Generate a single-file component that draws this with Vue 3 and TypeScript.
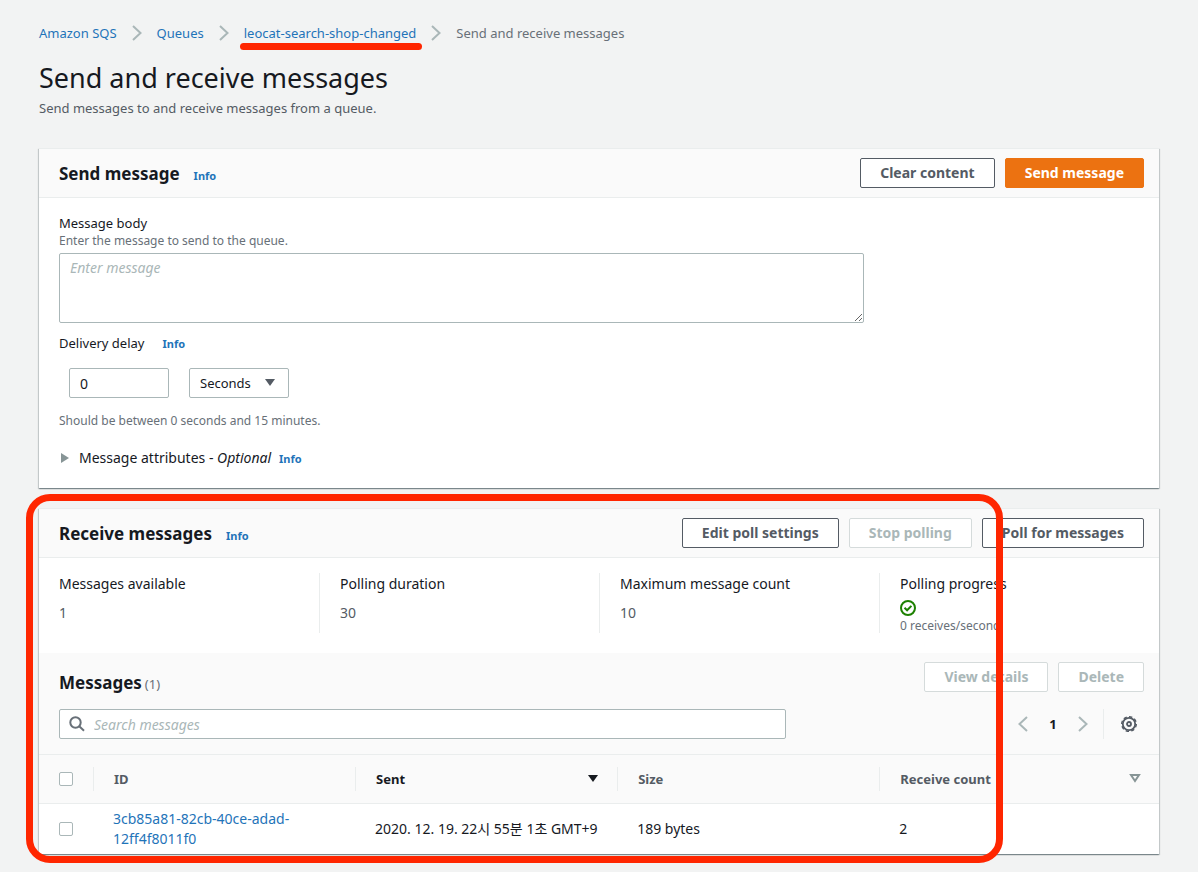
<script setup lang="ts">
import { ref } from 'vue'

interface Stat {
  label: string
  value: string
}
interface Message {
  id: string
  sent: string
  size: string
  receiveCount: number
}

const body = ref('')
const delay = ref('0')
const unit = ref('Seconds')
const search = ref('')

const stats: Stat[] = [
  { label: 'Messages available', value: '1' },
  { label: 'Polling duration', value: '30' },
  { label: 'Maximum message count', value: '10' },
]
const messages: Message[] = [
  {
    id: '3cb85a81-82cb-40ce-adad-12ff4f8011f0',
    sent: '2020. 12. 19. 22시 55분 1초 GMT+9',
    size: '189 bytes',
    receiveCount: 2,
  },
]
const crumbs = [
  { text: 'Amazon SQS', marked: false },
  { text: 'Queues', marked: false },
  { text: 'leocat-search-shop-changed', marked: true },
]
</script>

<template>
  <main class="page">
    <nav class="crumbs" aria-label="Breadcrumb">
      <template v-for="c in crumbs" :key="c.text">
        <a href="#" :class="{ marked: c.marked }">{{ c.text }}</a>
        <svg class="chev" viewBox="0 0 10 16" aria-hidden="true"><path d="M1 1l7.5 7L1 15" /></svg>
      </template>
      <span>Send and receive messages</span>
    </nav>

    <header class="title">
      <h1>Send and receive messages</h1>
      <p>Send messages to and receive messages from a queue.</p>
    </header>

    <section class="card">
      <div class="card-head">
        <h2>Send message</h2>
        <a class="info" href="#">Info</a>
        <div class="actions">
          <button class="btn" type="button">Clear content</button>
          <button class="btn primary" type="button">Send message</button>
        </div>
      </div>
      <div class="form">
        <label for="body">Message body</label>
        <p class="hint">Enter the message to send to the queue.</p>
        <textarea id="body" v-model="body" class="box" placeholder="Enter message"></textarea>
        <div class="row">
          <label for="delay">Delivery delay</label>
          <a class="info" href="#">Info</a>
        </div>
        <div class="delay">
          <input id="delay" v-model="delay" class="box" type="text" />
          <div class="select">
            <select v-model="unit" class="box" aria-label="Delay unit">
              <option>Seconds</option>
              <option>Minutes</option>
            </select>
            <svg viewBox="0 0 12 9" aria-hidden="true"><path d="M1 1h10L6 8z" /></svg>
          </div>
        </div>
        <p class="hint">Should be between 0 seconds and 15 minutes.</p>
        <div class="attributes">
          <button class="expander" type="button" aria-expanded="false">
            <svg viewBox="0 0 8 10" aria-hidden="true"><path d="M0 0l8 5-8 5z" /></svg>
            <span>Message attributes - <em>Optional</em></span>
          </button>
          <a class="info" href="#">Info</a>
        </div>
      </div>
    </section>

    <section class="card receive">
      <div class="card-head">
        <h2>Receive messages</h2>
        <a class="info" href="#">Info</a>
        <div class="actions">
          <button class="btn" type="button">Edit poll settings</button>
          <button class="btn" type="button" disabled>Stop polling</button>
          <button class="btn" type="button">Poll for messages</button>
        </div>
      </div>

      <dl class="stats">
        <div v-for="s in stats" :key="s.label">
          <dt>{{ s.label }}</dt>
          <dd>{{ s.value }}</dd>
        </div>
        <div>
          <dt>Polling progress</dt>
          <dd class="progress">
            <svg viewBox="0 0 16 16" aria-hidden="true">
              <circle cx="8" cy="8" r="7" />
              <path d="M4.5 7.8l2.6 2.5 4.3-4.4" />
            </svg>
            <span>0 receives/second</span>
          </dd>
        </div>
      </dl>

      <div class="toolbar">
        <div class="toolbar-head">
          <h2>Messages</h2>
          <span class="count">(1)</span>
          <div class="actions">
            <button class="btn" type="button" disabled>View details</button>
            <button class="btn" type="button" disabled>Delete</button>
          </div>
        </div>
        <div class="filter">
          <div class="search">
            <svg viewBox="0 0 16 16" aria-hidden="true">
              <circle cx="6.5" cy="6.5" r="5.2" />
              <path d="M10.5 10.5l4.5 4.2" />
            </svg>
            <input v-model="search" class="box" type="text" placeholder="Search messages" aria-label="Search messages" />
          </div>
          <div class="pager">
            <button type="button" aria-label="Previous page">
              <svg class="chev" viewBox="0 0 10 16" aria-hidden="true"><path d="M9 1L1.5 8 9 15" /></svg>
            </button>
            <button class="current" type="button">1</button>
            <button type="button" aria-label="Next page">
              <svg class="chev" viewBox="0 0 10 16" aria-hidden="true"><path d="M1 1l7.5 7L1 15" /></svg>
            </button>
            <button class="settings" type="button" aria-label="Preferences">
              <svg viewBox="0 0 16 16" aria-hidden="true">
                <circle cx="8" cy="8" r="6.2" />
                <circle class="teeth" cx="8" cy="8" r="7.3" pathLength="80" />
                <circle cx="8" cy="8" r="2" />
              </svg>
            </button>
          </div>
        </div>
      </div>

      <table>
        <colgroup>
          <col class="c-check" />
          <col class="c-data" />
          <col class="c-data" />
          <col class="c-data" />
          <col />
        </colgroup>
        <thead>
          <tr>
            <th class="check"><input type="checkbox" aria-label="Select all messages" /></th>
            <th><div>ID</div></th>
            <th class="sorted">
              <div>
                Sent
                <button type="button" aria-label="Sort by sent">
                  <svg viewBox="0 0 12 9" aria-hidden="true"><path d="M1 1h10L6 8z" /></svg>
                </button>
              </div>
            </th>
            <th><div>Size</div></th>
            <th>
              <div>
                Receive count
                <button type="button" aria-label="Sort by receive count">
                  <svg class="hollow" viewBox="0 0 12 9" aria-hidden="true"><path d="M2 1h8L6 7z" /></svg>
                </button>
              </div>
            </th>
          </tr>
        </thead>
        <tbody>
          <tr v-for="m in messages" :key="m.id">
            <td class="check"><input type="checkbox" :aria-label="'Select ' + m.id" /></td>
            <td><a href="#">{{ m.id }}</a></td>
            <td class="nowrap">{{ m.sent }}</td>
            <td>{{ m.size }}</td>
            <td>{{ m.receiveCount }}</td>
          </tr>
        </tbody>
      </table>
      <div class="highlight" aria-hidden="true"></div>
    </section>
  </main>
</template>

<style>
body {
  margin: 0;
  background: #f2f3f3;
}
</style>

<style scoped>
.page {
  min-height: 100vh;
  box-sizing: border-box;
  padding: 23px 39px 18px;
  background: #f2f3f3;
  color: #16191f;
  font: 13px/20px "Noto Sans", "Noto Sans CJK KR", sans-serif;
}
.page * {
  box-sizing: border-box;
}
a {
  color: #1f74b9;
  text-decoration: none;
}
h1, h2, p, dl, dd {
  margin: 0;
}
button, input, select, textarea {
  font: inherit;
  color: inherit;
}
svg {
  display: block;
  fill: none;
}
.crumbs {
  display: flex;
  align-items: center;
  gap: 15px;
  color: #687078;
}
.chev {
  width: 10px;
  height: 16px;
  stroke: #aab7b8;
  stroke-width: 2;
}
.marked {
  position: relative;
}
.marked::after {
  content: "";
  position: absolute;
  left: -4px;
  right: -6px;
  top: 20px;
  height: 7px;
  border-radius: 4px;
  background: #ff2600;
}
.title {
  padding: 17px 0 30px;
}
.title h1 {
  padding-bottom: 2px;
  font-size: 27px;
  line-height: 36px;
  font-weight: 400;
}
.title p {
  color: #545b64;
}
.card {
  position: relative;
  margin-bottom: 20px;
  border-top: 1px solid #eaeded;
  background: #fff;
  box-shadow: 0 1px 1px 0 rgba(0, 28, 36, 0.3), 1px 1px 1px 0 rgba(0, 28, 36, 0.15), -1px 1px 1px 0 rgba(0, 28, 36, 0.15);
}
.receive {
  margin-bottom: 0;
}
.card-head {
  display: flex;
  align-items: center;
  padding: 9px 15px 9px 20px;
  border-bottom: 1px solid #eaeded;
  background: #fafafa;
}
h2 {
  padding-top: 2px;
  font-size: 17px;
  line-height: 28px;
  font-weight: 700;
}
.info {
  margin-left: 14px;
  padding-top: 3px;
  font-size: 11px;
  line-height: 16px;
  font-weight: 700;
}
.card-head .info {
  padding-top: 5px;
}
.row .info {
  margin-left: 18px;
}
.actions {
  display: flex;
  gap: 10px;
  margin-left: auto;
}
.btn {
  height: 30px;
  padding: 0 19px;
  border: 1px solid #545b64;
  border-radius: 2px;
  background: #fff;
  color: #545b64;
  font-size: 14px;
  font-weight: 700;
}
.btn.primary {
  border-color: #ec7211;
  background: #ec7211;
  color: #fff;
}
.btn:disabled {
  border-color: #d5dbdb;
  color: #aab7b8;
}
.form {
  padding: 15px 20px 20px;
}
.form > label {
  display: block;
}
.hint {
  color: #687078;
  font-size: 12px;
  line-height: 16px;
}
.box {
  border: 1px solid #aab7b8;
  border-radius: 2px;
  background: #fff;
  outline: 0;
}
.box::placeholder {
  color: #aab7b8;
  font-style: italic;
}
textarea {
  display: block;
  width: calc(75% - 5px);
  height: 70px;
  margin: 4px 0 10px;
  padding: 4px 10px;
  font-size: 14px;
}
.row {
  display: flex;
}
.delay {
  display: flex;
  gap: 20px;
  padding: 15px 10px;
}
.delay input {
  width: 100px;
  height: 30px;
  padding: 0 10px;
  font-size: 14px;
}
.select {
  position: relative;
}
.select select {
  width: 100px;
  height: 30px;
  padding: 0 10px;
  appearance: none;
}
.select svg {
  position: absolute;
  right: 13px;
  top: 10px;
  width: 12px;
  height: 9px;
  fill: #545b64;
  pointer-events: none;
}
.attributes {
  display: flex;
  padding-top: 19px;
}
.attributes .info {
  margin-left: 8px;
}
.expander {
  display: flex;
  align-items: center;
  gap: 10px;
  padding: 0 0 0 2px;
  border: 0;
  background: none;
  font-size: 14px;
}
.expander svg {
  width: 8px;
  height: 10px;
  fill: #879596;
}
.stats {
  display: grid;
  grid-template-columns: repeat(4, 1fr);
  padding: 15px 0 20px;
  font-size: 14px;
}
.stats > div {
  height: 60px;
  padding: 1px 0 0 20px;
  border-left: 1px solid #eaeded;
}
.stats > div:first-child {
  border-left-color: transparent;
  padding-left: 19px;
}
.stats dd {
  margin-top: 9px;
  color: #545b64;
}
.stats dd.progress {
  margin-top: 6px;
  color: #687078;
  font-size: 12px;
  line-height: 20px;
}
.progress svg {
  width: 16px;
  height: 16px;
  stroke: #1d8102;
  stroke-width: 2;
}
.toolbar {
  padding: 9px 15px 15px 20px;
  border-bottom: 1px solid #eaeded;
  background: #fafafa;
}
.toolbar-head {
  display: flex;
  align-items: flex-start;
}
.toolbar-head h2 {
  padding-top: 7px;
}
.count {
  margin-left: 3px;
  padding-top: 12px;
  color: #687078;
}
.filter {
  display: flex;
  justify-content: space-between;
  padding-top: 12px;
}
.search {
  position: relative;
  width: 67%;
}
.search svg {
  position: absolute;
  left: 10px;
  top: 7px;
  width: 16px;
  height: 16px;
  stroke: #687078;
  stroke-width: 2;
}
.search input {
  display: block;
  width: 100%;
  height: 30px;
  padding: 0 10px 0 34px;
  font-size: 14px;
}
.pager {
  display: flex;
}
.pager button {
  display: grid;
  place-items: center;
  width: 30px;
  height: 30px;
  padding: 0;
  border: 0;
  background: none;
}
.pager .current {
  font-weight: 700;
}
.pager .settings {
  width: 41px;
  margin-left: 5px;
  padding-left: 10px;
  border-left: 1px solid #eaeded;
}
.settings svg {
  width: 16px;
  height: 16px;
  stroke: #545b64;
  stroke-width: 1.8;
}
.settings .teeth {
  stroke-width: 1.4;
  stroke-dasharray: 6 4;
}
table {
  width: 100%;
  table-layout: fixed;
  border-collapse: collapse;
}
.c-check {
  width: 54px;
}
.c-data {
  width: 23.4%;
}
th {
  height: 48px;
  padding: 0;
  border-bottom: 1px solid #eaeded;
  background: #fafafa;
  color: #545b64;
  text-align: left;
}
th.sorted {
  color: #16191f;
}
th div {
  display: flex;
  align-items: center;
  justify-content: space-between;
  height: 24px;
  padding: 0 18px 0 20px;
  border-left: 1px solid #eaeded;
}
th button {
  padding: 0;
  border: 0;
  background: none;
}
th button svg {
  width: 12px;
  height: 9px;
  fill: currentColor;
}
th button .hollow {
  fill: none;
  stroke: #879596;
  stroke-width: 2;
}
td {
  height: 50px;
  padding: 5px 20px;
  font-size: 14px;
}
.nowrap {
  white-space: nowrap;
}
.check {
  padding: 0 20px;
}
.check input {
  display: block;
  width: 14px;
  height: 14px;
  margin: 0;
  appearance: none;
  border: 1px solid #aab7b8;
  border-radius: 2px;
  background: #fff;
}
.highlight {
  position: absolute;
  top: -15px;
  bottom: -9px;
  left: -13px;
  right: 156px;
  border: 7px solid #ff2600;
  border-radius: 24px;
  pointer-events: none;
}
</style>
